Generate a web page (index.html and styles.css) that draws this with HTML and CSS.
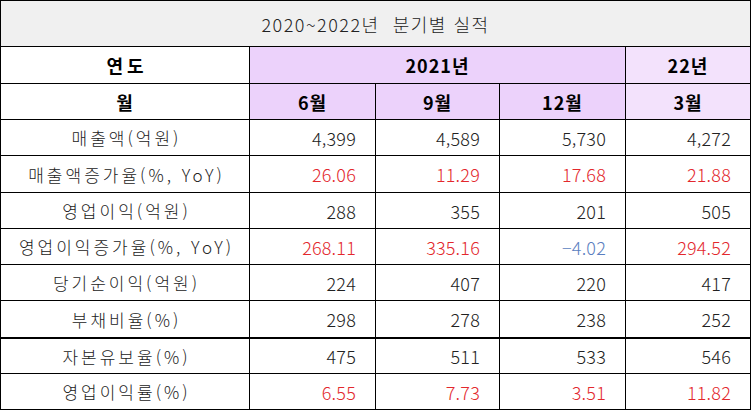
FILE: index.html
```html
<!DOCTYPE html>
<html lang="ko">
<head>
<meta charset="utf-8">
<title>2020~2022년 분기별 실적</title>
<link rel="stylesheet" href="styles.css">
</head>
<body>
<div class="sheet">
  <div class="cell title span5">2020~2022년&nbsp;&nbsp;분기별 실적</div>

  <div class="cell head wide">연도</div>
  <div class="cell head y21 span3">2021년</div>
  <div class="cell head y22">22년</div>

  <div class="cell head">월</div>
  <div class="cell head y21">6월</div>
  <div class="cell head y21">9월</div>
  <div class="cell head y21">12월</div>
  <div class="cell head y22">3월</div>

  <div class="cell label">매출액(억원)</div>
  <div class="cell num">4,399</div>
  <div class="cell num">4,589</div>
  <div class="cell num">5,730</div>
  <div class="cell num">4,272</div>

  <div class="cell label">매출액증가율(%, YoY)</div>
  <div class="cell num red">26.06</div>
  <div class="cell num red">11.29</div>
  <div class="cell num red">17.68</div>
  <div class="cell num red">21.88</div>

  <div class="cell label">영업이익(억원)</div>
  <div class="cell num">288</div>
  <div class="cell num">355</div>
  <div class="cell num">201</div>
  <div class="cell num">505</div>

  <div class="cell label">영업이익증가율(%, YoY)</div>
  <div class="cell num red">268.11</div>
  <div class="cell num red">335.16</div>
  <div class="cell num blue">−4.02</div>
  <div class="cell num red">294.52</div>

  <div class="cell label">당기순이익(억원)</div>
  <div class="cell num">224</div>
  <div class="cell num">407</div>
  <div class="cell num">220</div>
  <div class="cell num">417</div>

  <div class="cell label">부채비율(%)</div>
  <div class="cell num">298</div>
  <div class="cell num">278</div>
  <div class="cell num">238</div>
  <div class="cell num">252</div>

  <div class="cell label thick">자본유보율(%)</div>
  <div class="cell num thick">475</div>
  <div class="cell num thick">511</div>
  <div class="cell num thick">533</div>
  <div class="cell num thick">546</div>

  <div class="cell label">영업이익률(%)</div>
  <div class="cell num red">6.55</div>
  <div class="cell num red">7.73</div>
  <div class="cell num red">3.51</div>
  <div class="cell num red">11.82</div>
</div>
</body>
</html>
```

FILE: styles.css
```css
html, body {
  margin: 0;
  padding: 0;
  background: #ffffff;
}

.sheet {
  display: grid;
  width: 751px;
  box-sizing: border-box;
  padding: 1px;
  gap: 1px;
  background: #000000;
  grid-template-columns: 248px 125px 123px 125px 124px;
  grid-template-rows: 45px 36px 35px 35px 36px 35px 35px 35px 36px 35px 35px;
  font-family: "Noto Sans CJK KR", "Noto Sans", sans-serif;
  color: #222222;
}

.cell {
  background: #ffffff;
  display: flex;
  align-items: center;
  justify-content: center;
  box-sizing: border-box;
  white-space: nowrap;
  font-size: 17px;
  line-height: 1;
}

.span5 { grid-column: span 5; }
.span3 { grid-column: span 3; }

.title {
  background: #f0f0f0;
  font-size: 18px;
  letter-spacing: 1.5px;
  font-weight: 300;
  padding-top: 1px;
}

.head {
  font-weight: 700;
  font-size: 18px;
  color: #000000;
  letter-spacing: 1px;
}

.wide { letter-spacing: 4px; padding-left: 4px; }

.y21 { background: #ecd2fb; }
.y22 { background: #f3e2fc; }

.label {
  letter-spacing: 3px;
  font-weight: 300;
  padding-left: 3px;
}

.num {
  justify-content: flex-end;
  padding-right: 19px;
  font-size: 18px;
  font-weight: 300;
  letter-spacing: 0.2px;
}

.thick { border-top: 1px solid #000000; }

.red { color: #e3282d; }
.blue { color: #5a7ec0; }
```
